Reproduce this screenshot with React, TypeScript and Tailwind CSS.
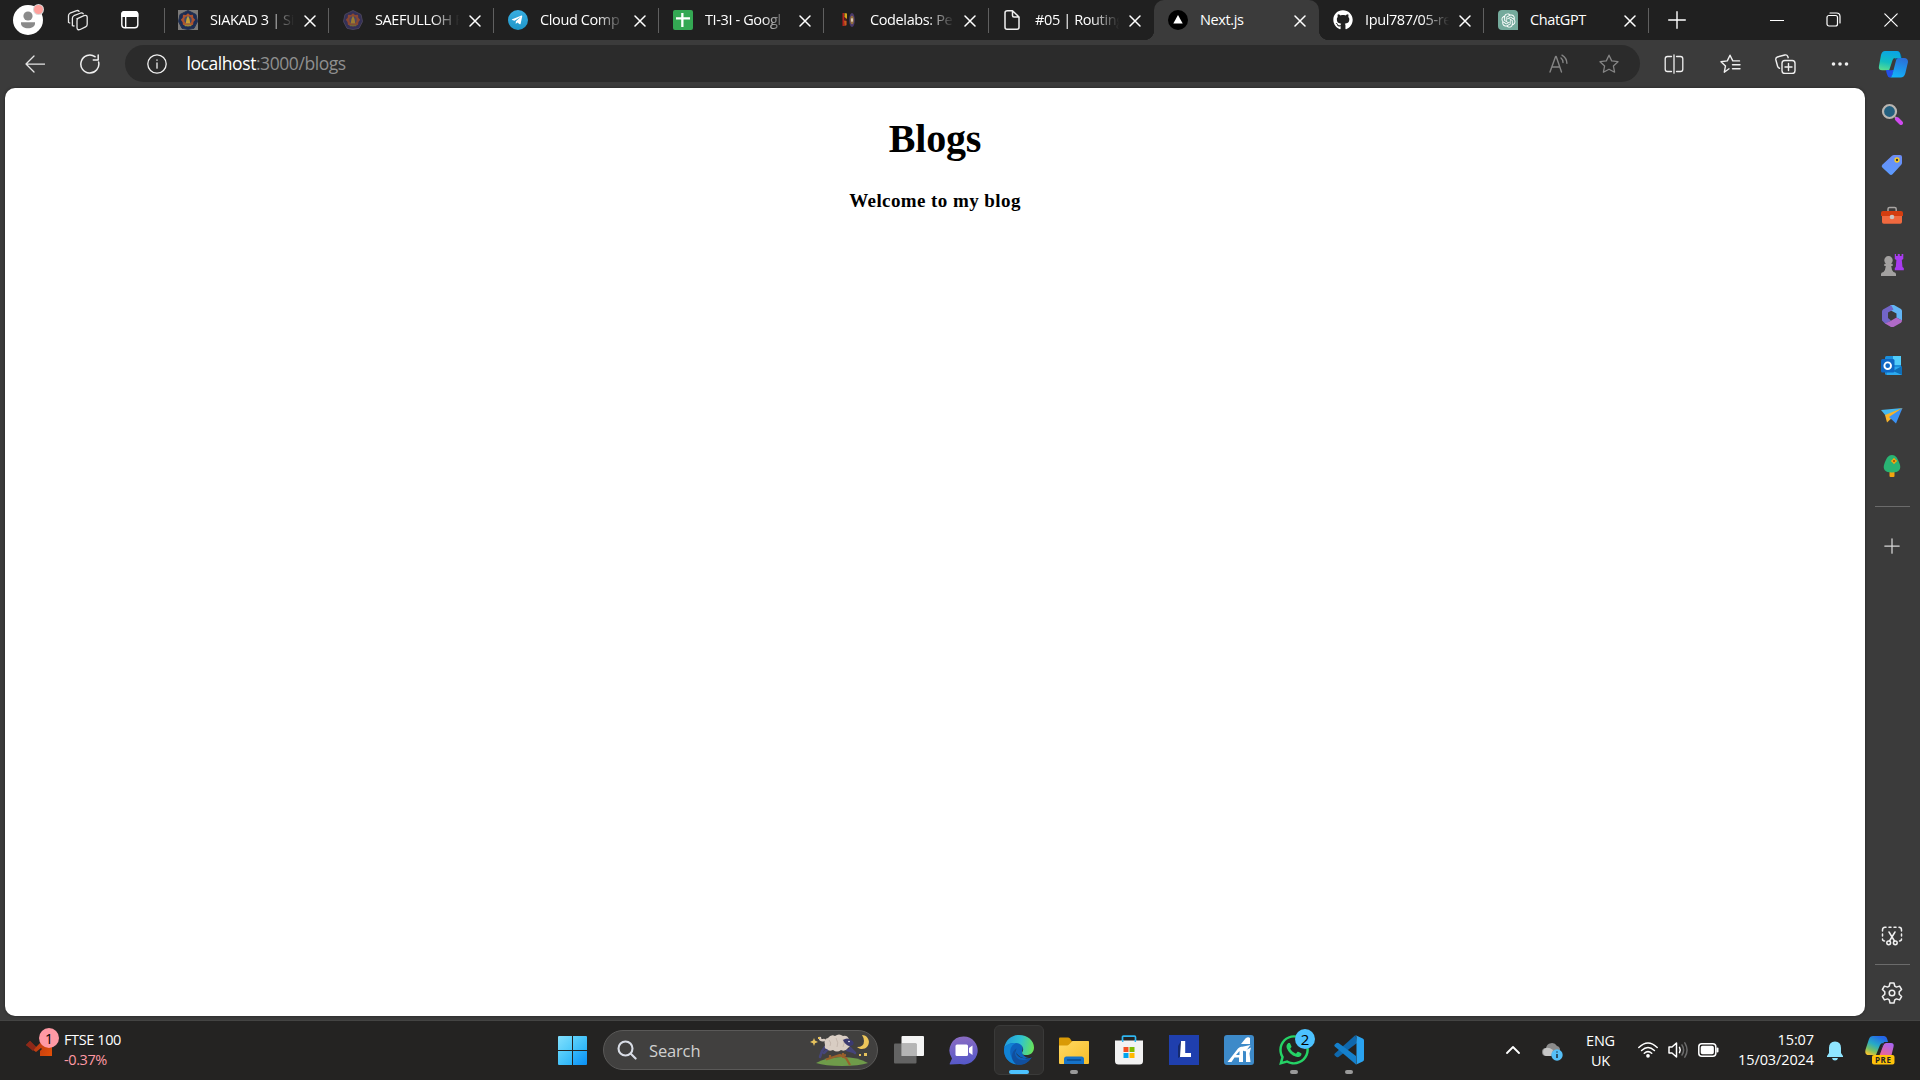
import React from "react";
import { FaGithub, FaWhatsapp, FaTelegramPlane } from "react-icons/fa";
import { RiOpenaiFill } from "react-icons/ri";

type IconProps = { w: number; h?: number; children: React.ReactNode; className?: string; sw?: number };

function Draw({ w, h = w, children, className = "" }: IconProps) {
  return (
    <svg width={w} height={h} viewBox={`0 0 ${w} ${h}`} fill="none" className={`shrink-0 ${className}`}>
      {children}
    </svg>
  );
}

function Line({ w, h = w, children, className = "text-[#f0f0f0]", sw = 1.25 }: IconProps) {
  return (
    <svg
      width={w}
      height={h}
      viewBox={`0 0 ${w} ${h}`}
      fill="none"
      stroke="currentColor"
      strokeWidth={sw}
      strokeLinecap="round"
      strokeLinejoin="round"
      className={`shrink-0 ${className}`}
    >
      {children}
    </svg>
  );
}

function Crest({ square }: { square?: boolean }) {
  return (
    <Draw w={20}>
      {square && <rect width="20" height="20" fill="#7d7b79" />}
      <path d="M10 .5 18 4.500l1.500 7-3.500 6.800L10 19.500l-6-1.200L.5 11.500 2 4.500Z" fill={square ? "#1c2d55" : "#343058"} stroke={square ? "#26334f" : "#4a4459"} />
      <path d="m10 3.200 2 1.700 3-.2.300 3 1.900 2.100-1.700 2.300-.5 2.900-3 .1-2 1.600-2-1.600-3-.1-.5-2.900-1.700-2.300 1.900-2.100.3-3 3 .2Z" fill={square ? "#ad532f" : "#8a4731"} />
      <circle cx="10" cy="10" r="3.700" fill={square ? "#3b4a6b" : "#4a4562"} />
      <path d="M10 5.500 11.500 9l.8 4.500H7.700L8.500 9Z" fill={square ? "#c79e35" : "#9d7b2e"} />
      <path d="M6 14.800h8l-1 1.500H7Z" fill={square ? "#9a8c3b" : "#716638"} />
    </Draw>
  );
}

const favicons: Record<string, React.ReactNode> = {
  siakad: <Crest square />,
  saef: <Crest />,
  telegram: (
    <span className="flex size-5 items-center justify-center rounded-full bg-linear-to-b from-[#37aee2] to-[#1e96c8]">
      <FaTelegramPlane className="mr-0.5 size-3 text-white" />
    </span>
  ),
  sheets: (
    <Draw w={20}>
      <rect width="20" height="20" rx="2" fill="#34a853" />
      <path d="M8.200 3h2.300v4.200H17v2.300h-6.500V17H8.200V9.500H3V7.200h5.200Z" fill="#fff" />
    </Draw>
  ),
  codelabs: (
    <Draw w={20}>
      <path d="M4.500 3h1.500v13H4.500Z" fill="#b5221f" />
      <path d="M6 6h2.500v10H6Z" fill="#59201c" />
      <path d="M6.500 3 9 3.500V9L6.500 7Z" fill="#d6a41c" />
      <path d="M6 10.500 8.500 11v4l-2 1Z" fill="#c9591e" />
      <ellipse cx="14" cy="10" rx="2.800" ry="7" fill="#4b3a6b" />
      <ellipse cx="14" cy="10" rx="1.800" ry="4.200" fill="#94703f" />
      <ellipse cx="14" cy="10" rx=".9" ry="2" fill="#e6dccb" />
    </Draw>
  ),
  file: (
    <Line w={20} sw={1.5}>
      <path d="M9.500 .8H4.500Q2 .8 2 2.800v14.400q0 2 2 2h10q2 0 2-2V7L9.500 .8V5.500Q9.500 7 11 7H16" />
    </Line>
  ),
  next: (
    <Draw w={20}>
      <circle cx="10" cy="10" r="10" fill="#000" />
      <path d="m10 5 4.700 8.500H5.300Z" fill="#fff" />
    </Draw>
  ),
  github: <FaGithub className="size-5 text-white" />,
  chatgpt: (
    <span className="flex size-5 items-center justify-center rounded-[4px] rounded-br-none bg-[#74aa9c]">
      <RiOpenaiFill className="size-[17px] text-white" />
    </span>
  ),
};

const tabs = [
  { icon: "siakad", title: "SIAKAD 3 | Si" },
  { icon: "saef", title: "SAEFULLOH F" },
  { icon: "telegram", title: "Cloud Comp" },
  { icon: "sheets", title: "TI-3I - Googl" },
  { icon: "codelabs", title: "Codelabs: Pe" },
  { icon: "file", title: "#05 | Routing" },
  { icon: "next", title: "Next.js", active: true },
  { icon: "github", title: "Ipul787/05-re" },
  { icon: "chatgpt", title: "ChatGPT" },
];

function Tab({ icon, title, active, quietEdge }: { icon: string; title: string; active?: boolean; quietEdge?: boolean }) {
  const fades = title.length > 8;
  return (
    <div className={`relative flex h-10 w-[165px] shrink-0 items-center pl-3.5 ${active ? "z-10 rounded-t-[10px] bg-[#3b3b3b]" : ""}`}>
      {!active && !quietEdge && <span className="absolute top-2 right-0 h-[25px] w-px bg-[#606060]" />}
      {active && (
        <>
          <span className="absolute bottom-0 -left-2.5 size-2.5 bg-[radial-gradient(circle_at_0_0,#202020_10px,#3b3b3b_10.5px)]" />
          <span className="absolute -right-2.5 bottom-0 size-2.5 bg-[radial-gradient(circle_at_100%_0,#202020_10px,#3b3b3b_10.5px)]" />
        </>
      )}
      <span className="flex size-5 shrink-0">{favicons[icon]}</span>
      <span
        className={`ml-3 w-[86px] shrink-0 text-[14.5px] leading-5 tracking-[-0.38px] whitespace-nowrap text-white ${
          fades ? "[mask-image:linear-gradient(to_right,#000_66%,transparent_98%)]" : ""
        }`}
      >
        {title}
      </span>
      <Line w={12} className="mt-0.5 ml-[8px] text-white" sw={1.5}>
        <path d="m1 1 10 10M11 1 1 11" />
      </Line>
    </div>
  );
}

function TabStrip() {
  return (
    <div className="flex h-10 items-center bg-[#202020]">
      <div className="relative ml-[13px] flex size-[30px]">
        <Draw w={30}>
          <circle cx="15" cy="15" r="15" fill="#fff" />
          <circle cx="15" cy="11" r="4.6" fill="#8a8a8a" />
          <path d="M8 17.300h14v1.200c0 3-3.200 4.800-7 4.800s-7-1.800-7-4.800Z" fill="#8a8a8a" />
        </Draw>
        <span className="absolute top-0 left-[21px] size-[9px] rounded-full bg-[#ff9f9b] ring-1 ring-[#d9d9d9]" />
      </div>
      <Line w={22} className="ml-[24px] text-[#e8e8e8]" sw={1.3}>
        <path d="M9.800 9.800 17 6.700q3.200-1 3.200 1.600v7q0 1.800-1.600 2.600l-5.400 2.600q-3 1-3.200-1.700v-7q0-1.400.8-2" />
        <path d="m7 17-1.600-.3V9.300q0-1.800 1.500-2.600L13.800 4q1.600-.4 2.400.7" />
        <path d="m2.800 14-1.300-.5V6.700q0-1.700 1.500-2.500L9.700 1.600q1.600-.4 2.400.7" />
      </Line>
      <Line w={20} className="ml-[31px] text-white" sw={1.4}>
        <rect x="1.800" y="1.800" width="16" height="16" rx="3" />
        <path d="M2 4q0-2.200 2.200-2.200h11.200q2.200 0 2.200 2.200v2.300H2Z" fill="currentColor" />
        <path d="M5.700 7v10.500" />
      </Line>
      <span className="ml-[24px] h-[25px] w-px bg-[#606060]" />
      <div className="-ml-px flex">
        {tabs.map((t, i) => (
          <Tab key={t.icon} {...t} quietEdge={i === 5} />
        ))}
      </div>
      <Line w={18} className="ml-[19px] text-white" sw={1.4}>
        <path d="M9 .7v16.600M.7 9h16.600" />
      </Line>
      <div className="ml-auto flex items-center pr-[22px] pb-px text-white">
        <Line w={14} sw={1.2} className="text-white">
          <path d="M.5 7.500h13" />
        </Line>
        <Line w={15} sw={1.2} className="ml-[42px] text-white">
          <rect x="1" y="3.500" width="10.500" height="10.500" rx="2" />
          <path d="M4 1h6.500Q14 1 14 4.500V11" />
        </Line>
        <Line w={14} sw={1.2} className="ml-[43px] text-white">
          <path d="m.8.8 12.400 12.400m0-12.400L.8 13.200" />
        </Line>
      </div>
    </div>
  );
}

const starPath = "m10 1.200 2.700 5.700 6.300.8-4.600 4.300 1.200 6.200L10 15.200l-5.600 3 1.200-6.200L1 7.700l6.300-.8Z";

function Toolbar() {
  return (
    <div className="flex h-12 items-center bg-[#3b3b3b] pb-px">
      <Line w={20} className="ml-[25px] text-[#e6e6e6]">
        <path d="M19.500 10H1M9 2 1 10l8 8" />
      </Line>
      <Line w={20} className="ml-[35px] text-[#f0f0f0]" sw={1.5}>
        <path d="M18.600 8A9 9 0 1 1 15 2.700M18.200 1v4.900h-4.900" />
      </Line>
      <div className="ml-[25px] flex h-[37px] w-[1515px] items-center rounded-full bg-[#2b2b2b]">
        <Line w={20} className="ml-[22px] text-[#f0f0f0]" sw={1.3}>
          <circle cx="10" cy="10" r="9.200" />
          <path d="M10 9v5.200M10 6v.3" />
        </Line>
        <span className="ml-[19.5px] pb-px text-[17.5px] leading-6 tracking-[-0.43px] text-[#8f8f8f]">
          <span className="text-white">localhost</span>:3000/blogs
        </span>
        <Line w={20} className="ml-auto text-[#858585]" sw={1.4}>
          <path d="m1 18 5.600-15.500h.6L12.500 18M3 13h7.800M12 4q2 1.600 2 4.500M13 1.200q4.800 2.800 4.900 8" />
        </Line>
        <Line w={20} className="mr-[21px] ml-[30px] text-[#858585]" sw={1.3}>
          <path d={starPath} />
        </Line>
      </div>
      <Line w={20} className="ml-[24px] text-[#f0f0f0]" sw={1.3}>
        <path d="M7.500 2.500h-4q-2.300 0-2.300 2.300v10.400q0 2.300 2.300 2.300h4M12.500 2.500h4q2.300 0 2.300 2.300v10.400q0 2.300-2.300 2.300h-4M10 .8v18.400" />
      </Line>
      <Line w={21} h={20} className="ml-[36px] text-[#f0f0f0]" sw={1.4}>
        <path d="M9 14.800 4.300 18.200l1.200-6.300L1 7.700l6.300-.8L10 1.200l2.800 5.700h6.700M12.500 10.700H20M12.500 14.700H20" />
      </Line>
      <Line w={21} h={20} className="ml-[34px] text-[#f0f0f0]" sw={1.4}>
        <rect x="7" y="6.500" width="13" height="13" rx="2.800" />
        <path d="M13.500 9.500v7M10 13h7M4.500 14.200Q3 13.800 2.600 12.300L.9 6q-.5-2.500 1.500-3L9.800 1q2.200-.5 3 1.500l.4 1.200" />
      </Line>
      <Draw w={18} h={6} className="ml-[35px]">
        <circle cx="2.500" cy="3" r="1.800" fill="#f0f0f0" />
        <circle cx="9" cy="3" r="1.800" fill="#f0f0f0" />
        <circle cx="15.500" cy="3" r="1.800" fill="#f0f0f0" />
      </Draw>
      <Draw w={30} h={27} className="mt-px ml-[29px]">
        <path d="M17 7 19 1q1-1 2 0 2 1 3 6l-7 2Z" fill="#075985" />
        <path d="M7 0h12q2.600 0 3.200 3l.8 4h-4q-2 0-2.700 2.300L13.300 17q-.7 2.300-3.200 2.300H4.200Q0 19.300 1 14.800L3 4Q4 0 7 0Z" fill="url(#cpA)" />
        <path d="M8 19h8l-2 6q-1 1.800-2.500 1.600Q9 26 8 19Z" fill="#2250e8" />
        <path d="M20 7h6q4 0 4 4l-2.600 11q-1.100 4.500-5 4.500H12q1.600-.3 2.400-3L18 9.500Q18.700 7 20 7Z" fill="url(#cpB)" />
        <path d="m17.300 8-3.600 11.300h-2.500L14.600 9q.5-2 2.700-2Z" fill="#3b3b3b" />
        <defs>
          <linearGradient id="cpA" x1="10" y1="0" x2="6" y2="20" gradientUnits="userSpaceOnUse">
            <stop stopColor="#0aa5e4" />
            <stop offset=".55" stopColor="#12bec0" />
            <stop offset="1" stopColor="#5fe08c" />
          </linearGradient>
          <linearGradient id="cpB" x1="24" y1="7" x2="18" y2="27" gradientUnits="userSpaceOnUse">
            <stop stopColor="#2b6fd8" />
            <stop offset="1" stopColor="#12b4fa" />
          </linearGradient>
        </defs>
      </Draw>
    </div>
  );
}

function Slot({ children, className = "" }: { children: React.ReactNode; className?: string }) {
  return <div className={`flex h-[50.3px] w-full shrink-0 items-center justify-center ${className}`}>{children}</div>;
}

function Sidebar() {
  return (
    <aside className="flex w-[55px] shrink-0 flex-col items-center pt-px pr-0.5">
      <Slot>
        <Draw w={22}>
          <path d="m14 14 3 3" stroke="#aaa" strokeWidth="2" />
          <path d="m16 16 4 4" stroke="#d04af0" strokeWidth="4" strokeLinecap="round" />
          <circle cx="8.500" cy="8.500" r="6.500" fill="#24607f" stroke="#b9b5b1" strokeWidth="2.200" />
        </Draw>
      </Slot>
      <Slot className="pt-0.5">
        <Draw w={22}>
          <path d="M13 1h6q2 0 2 2v6q0 1-1 2l-8.500 9.300q-1.500 1.400-3 0L1.300 13.500q-1.300-1.400 0-2.800L11 1.800Q12 1 13 1Z" fill="url(#tagG)" />
          <circle cx="16" cy="6" r="1.900" fill="#333" stroke="#f6c927" strokeWidth="1.500" />
          <defs>
            <linearGradient id="tagG" x1="12" y1="1" x2="9" y2="21" gradientUnits="userSpaceOnUse">
              <stop stopColor="#6c8cf5" />
              <stop offset="1" stopColor="#5b9bff" />
            </linearGradient>
          </defs>
        </Draw>
      </Slot>
      <Slot>
        <Draw w={24} h={18}>
          <path d="M8 6V3q0-1.600 1.600-1.600h5Q16.200 1.400 16.200 3v3" stroke="#a9a5a3" strokeWidth="1.500" />
          <path d="M2 9h20v7q0 1.800-1.800 1.800H3.800Q2 17.800 2 16Z" fill="#f0693f" />
          <path d="M1 7q0-2 2-2h18q2 0 2 2v3H1Z" fill="#d33d10" />
          <circle cx="12" cy="11" r="2.300" fill="#c9c5c3" />
        </Draw>
      </Slot>
      <Slot>
        <Draw w={24}>
          <path d="M14 1h2v2h1.800V1h2v2h1.800V1h1.700v5l-1.500 1 .7 7 1.300 1v2.200h-9V15l1-1 .6-7-1.600-1V1Z" fill="#a83bf0" />
          <path d="M1 23v-2q0-1.600 2.500-2 2-2 2.300-6H4.300v-2l1.700-.4a4.200 4.200 0 1 1 5 0l1.700.4v2h-1.500q.3 4 2.300 6 2.500.4 2.500 2v2Z" fill="#a3a1a0" />
        </Draw>
      </Slot>
      <Slot className="pt-px">
        <Draw w={22}>
          <path d="m9.500 0h3.500l7 4q1 1 1 2v9.500q-3-1.500-5.500-3V8.500L9 5Z" fill="#62b5f5" />
          <path d="m10 0-8 4.500Q1 5.500 1 6.500v9l3.500 3.500L10 15.500 7 13V7.500l5.500-3Z" fill="#7265c7" />
          <path d="M4 18.500 10 22q1.300.4 2.500 0l7.500-4.200q1-1 1-2.500-3-1-5.500-2.800L9.500 16Z" fill="#b06ac8" />
        </Draw>
      </Slot>
      <Slot>
        <Draw w={22}>
          <rect x="4" y="1" width="16" height="19" rx="1.500" fill="#1b8fdc" />
          <path d="M12 1h8v9h-8Z" fill="#50cdfb" />
          <path d="M6 12h15v8H6Z" fill="#2baaf0" />
          <path d="m21 11-9 5 9 4Z" fill="#0f6fb8" />
          <rect x="0" y="4" width="13.500" height="13.500" rx="1.500" fill="#0f67c4" />
          <circle cx="6.700" cy="10.700" r="3.300" stroke="#fff" strokeWidth="1.900" />
        </Draw>
      </Slot>
      <Slot>
        <Draw w={24} h={18}>
          <path d="M1 3 22.500 1 6 9Z" fill="#45b7ee" />
          <path d="m5 8 17.500-7L7 15.500Z" fill="#f7b32b" />
          <path d="m9 10 13.500-9L16 16.500Z" fill="#3b92f5" />
        </Draw>
      </Slot>
      <Slot>
        <Draw w={20} h={22}>
          <rect x="7.500" y="16" width="5" height="6" rx="1" fill="#f2a40f" />
          <path d="M10 0C5.500 0 4 4.500 2.300 9 .5 14 3 17.500 10 17.500S19.500 14 17.700 9C16 4.500 14.500 0 10 0Z" fill="#29b473" />
          <path d="M10.500 4.500 12 2.800l1.500 1.700L15.300 6l-1.800 1.500L12 9.200l-1.500-1.700L8.700 6Z" fill="#f7a60f" />
          <circle cx="12" cy="6" r="1" fill="#a04a00" />
        </Draw>
      </Slot>
      <span className="mt-[15px] ml-0.5 h-px w-[35px] shrink-0 bg-[#6b6b6b]" />
      <Line w={16} className="mt-[31px] text-[#d8d8d8]">
        <path d="M8 .8v14.400M.8 8h14.400" />
      </Line>
      <div className="mt-auto flex flex-col items-center pb-4">
        <Line w={22} h={20} sw={1.5}>
          <path d="M1.500 5V4Q1.500 1.300 4 1.300h1M8 1.300h2M13 1.300h2M18 1.300q2.500 0 2.500 2.700v1M20.500 8v2M20.500 13q0 2-2 2M1.500 8v2M1.500 13q0 2 2 2M8 6l5.500 9M14 6l-5.500 9" />
          <circle cx="7.700" cy="16.800" r="1.900" />
          <circle cx="14.300" cy="16.800" r="1.900" />
        </Line>
        <span className="mt-[18px] ml-0.5 h-px w-[35px] bg-[#6b6b6b]" />
        <Line w={22} className="mt-[17px] text-[#f0f0f0]" sw={1.5}>
          <circle cx="11" cy="11" r="2.800" />
          <path d="M9 1h4l.8 3.200 1.600.9 3.200-1 2 3.400-2.400 2.300v2.400l2.400 2.300-2 3.400-3.200-1-1.600.9L13 21H9l-.8-3.200-1.600-.9-3.200 1-2-3.400 2.400-2.300V9.800L1.400 7.500l2-3.400 3.200 1 1.600-.9Z" />
        </Line>
      </div>
    </aside>
  );
}

function Sheep() {
  return (
    <Draw w={60} h={34}>
      <path d="M6 30Q16 24 32 24t26 6q-9 3-26 3T6 30Z" fill="#6f9b4a" />
      <path d="M16 26.500 30 22l6 3 4 7M20 22v4M33 20v5M26 23l10-1" stroke="#98602c" strokeWidth="2.200" />
      <path d="m15 14-3 4-2 6M19 15l-5 5M40 15l5 5M37 17l7 2" stroke="#45457a" strokeWidth="2.500" strokeLinecap="round" />
      <path d="M15 12q-2-6 3-7 3-4 7-2 4-3 8 0 5-1 6 4 3 5-1 8-3 4-7 2-4 3-8 0-4 2-6-1-3 0-2-4Z" fill="#d9cdc3" />
      <path d="M19 7q3 3 1 6M26 5q3 5 1 9M33 6q2 5 0 8" stroke="#c5b7ad" strokeWidth="1" />
      <path d="M14 7q-4 1-4-2" stroke="#d9cdc3" strokeWidth="2.500" strokeLinecap="round" />
      <path d="M33 7q4-3 8 0 4 2 2 5-4 2-6 0-3-2-4-5Z" fill="#3b3a70" />
      <circle cx="39" cy="8.500" r=".8" fill="#fff" />
      <path d="M52 2a7 7 0 1 1-5 12q7 0 7-6 0-3-2-6Z" fill="#edc65a" />
      <path d="m4 5 1 2.600L8 9l-3 1.200L4 13l-1-2.800L0 9l3-1.400ZM8 4h2v2H8ZM54 20h3v3h-3ZM49 21h2v2h-2Z" fill="#e6c25d" />
    </Draw>
  );
}

function AppSlot({ children, mark, active }: { children: React.ReactNode; mark?: boolean; active?: boolean }) {
  return (
    <div className={`relative mr-[5px] flex size-[50px] shrink-0 items-center justify-center rounded-md ${active ? "border border-[#3a3a39] bg-[#2f2e2d]" : ""}`}>
      {children}
      {(mark || active) && (
        <span className={`absolute inset-x-0 mx-auto h-1 rounded-full ${active ? "bottom-0 w-5 bg-[#4cc2ff]" : "bottom-px w-2 bg-[#9a9a9a]"}`} />
      )}
    </div>
  );
}

function CopilotPre() {
  return (
    <Draw w={30} h={29}>
      <path d="M8 0h11q3 0 4 6h-4l-4 9q-1 4-4 4H4Q-1 19 .7 13L4 3Q5 0 8 0Z" fill="url(#preA)" />
      <path d="M21 7h5q3.500 0 2.500 4L26 21H11q3 0 4-3l3-8q1-3 3-3Z" fill="url(#preB)" />
      <path d="m18.500 7-4.500 12h-3l4-10q.8-2 3.500-2Z" fill="#242322" />
      <rect x="7" y="19" width="22.500" height="9.500" rx="2" fill="#ffc20a" />
      <text x="18.300" y="26.800" fontSize="8" fontWeight="700" textAnchor="middle" fill="#222" letterSpacing=".6" fontFamily="Open Sans, sans-serif">PRE</text>
      <defs>
        <linearGradient id="preA" x1="14" y1="0" x2="5" y2="19" gradientUnits="userSpaceOnUse">
          <stop stopColor="#2466e8" />
          <stop offset=".45" stopColor="#26aac8" />
          <stop offset=".75" stopColor="#73bf66" />
          <stop offset="1" stopColor="#f2c230" />
        </linearGradient>
        <linearGradient id="preB" x1="25" y1="7" x2="18" y2="21" gradientUnits="userSpaceOnUse">
          <stop stopColor="#a865f2" />
          <stop offset="1" stopColor="#f2648c" />
        </linearGradient>
      </defs>
    </Draw>
  );
}

function Taskbar() {
  return (
    <footer className="flex h-[60px] items-center border-t border-[#444443] bg-[#242322] pb-px text-white">
      <div className="relative ml-[25px] flex h-[40px] w-[39px] shrink-0">
        <Draw w={32} h={34}>
          <path d="m1 15 4-4 6 6 5-5 5 5 6-6v15H15v-5l2-2-1-1-5 4Z" fill="url(#ftse)" />
          <path d="m1 15 4-4 6 6-3 4Z" fill="#8e2818" />
          <defs>
            <linearGradient id="ftse" x1="2" y1="12" x2="28" y2="28" gradientUnits="userSpaceOnUse">
              <stop stopColor="#a83018" />
              <stop offset="1" stopColor="#e85206" />
            </linearGradient>
          </defs>
        </Draw>
        <span className="absolute -top-[2px] left-[14px] flex size-5 items-center justify-center rounded-full bg-[#ff99a4] text-[14px] text-black">1</span>
      </div>
      <div className="w-[120px] shrink-0 text-[14.5px] leading-5 tracking-[-0.4px]">
        <div>FTSE 100</div>
        <div className="text-[#ff99a4]">-0.37%</div>
      </div>

      <div className="ml-[374px] flex items-center">
        <Draw w={29} className="mt-px">
          <path d="M1 0h13v14H0V1Q0 0 1 0Z" fill="url(#wA)" />
          <path d="M15 0h13q1 0 1 1v13H15Z" fill="url(#wB)" />
          <path d="M0 15h14v14H1q-1 0-1-1Z" fill="url(#wB)" />
          <path d="M15 15h14v13q0 1-1 1H15Z" fill="url(#wC)" />
          <defs>
            <linearGradient id="wA" x1="0" y1="0" x2="1" y2="1"><stop stopColor="#82dffd" /><stop offset="1" stopColor="#4cc9fa" /></linearGradient>
            <linearGradient id="wB" x1="0" y1="0" x2="1" y2="1"><stop stopColor="#5fd2fb" /><stop offset="1" stopColor="#2bb3f8" /></linearGradient>
            <linearGradient id="wC" x1="0" y1="0" x2="1" y2="1"><stop stopColor="#35b8fb" /><stop offset="1" stopColor="#0a90f5" /></linearGradient>
          </defs>
        </Draw>
        <div className="ml-4 flex h-10 w-[275px] items-center rounded-full border border-[#5a5958] bg-[#41403f] pl-[13px]">
          <Line w={20} className="text-[#d9dde6]" sw={2.1}>
            <circle cx="8.500" cy="8.500" r="7" />
            <path d="m13.600 13.600 5 5" />
          </Line>
          <span className="ml-[12px] pt-px text-[16.5px] leading-6 tracking-[-0.15px] text-[#d0d0d0]">Search</span>
          <span className="mr-[7px] ml-auto flex"><Sheep /></span>
        </div>
        <div className="ml-[6px] flex">
          <AppSlot>
            <Draw w={30} h={28}>
              <rect x="7.500" y="0" width="22.500" height="20" rx="1" fill="#f4f4f4" />
              <rect x="0" y="7.500" width="22.500" height="20" rx="1" fill="#6e6e6e" fillOpacity=".85" />
              <rect x="7.500" y="7.500" width="15" height="12.500" fill="#b5b5b5" />
            </Draw>
          </AppSlot>
          <AppSlot>
            <Draw w={29} className="mr-0.5">
              <path d="M15 .5A14 14 0 1 1 11 28L1 28.500Q.3 28.200 1 27L3 22.500A14 14 0 0 1 15 .5Z" fill="url(#chat)" />
              <rect x="6.500" y="8.500" width="12.500" height="11.500" rx="1.500" fill="#fff" />
              <path d="m20 12 3.500-2.500v9.500L20 16.500Z" fill="#fff" />
              <defs>
                <linearGradient id="chat" x1="12" y1="0" x2="15" y2="28" gradientUnits="userSpaceOnUse"><stop stopColor="#8b6cc2" /><stop offset="1" stopColor="#5558c9" /></linearGradient>
              </defs>
            </Draw>
          </AppSlot>
          <AppSlot active>
            <Draw w={30}>
              <path d="M0 15C0 8 6 4 12 6c6 2 8 6 6 10 0 5 5 8 10 6-4 6-10 9-17 7C4 27 0 22 0 15Z" fill="#0e62bd" />
              <path d="M.2 13C1.500 5 7.500 0 15 0c9 0 15 6 15 12.500 0 5-3.500 7.500-7.500 7.500-4 0-5-1.500-4-3.200 2-3.500-.5-8-6-8.800C7 7.400 2 9.500.2 13Z" fill="url(#edA)" />
              <path d="M0 15c0-4.500 5-7.500 12-7-5 2-7 7-5 13 1 3 2.500 6 5.500 8.600C5 28.500 0 22.500 0 15Z" fill="#1183d5" />
              <path d="M12.500 13.500q-2.500 3-1 7c2 5 8 6 15.500 2.500-3.500 6-9 7.500-14.500 6.600C6.500 25 6.500 17 12.500 13.500Z" fill="#114f9e" />
              <path d="M12.500 13.500q-2 4 2 7.800 4 3 9.500 1.200l3.500-1.300q1-.2.400 1-6 2.500-11.400-.3Q9.500 17.500 12.500 13.500Z" fill="#2a2928" />
              <defs>
                <linearGradient id="edA" x1="2" y1="7" x2="30" y2="13" gradientUnits="userSpaceOnUse"><stop stopColor="#249fdd" /><stop offset=".5" stopColor="#2fc3d0" /><stop offset="1" stopColor="#6be553" /></linearGradient>
              </defs>
            </Draw>
          </AppSlot>
          <AppSlot mark>
            <Draw w={30} h={28} className="mt-px">
              <path d="M0 1.500Q0 .5 1 .5h8q1 0 2 1l2 3H30V10H0Z" fill="#d99a06" />
              <path d="M0 8.500h8q1 0 2-1l3.500-3.500H29q1 0 1 1V26q0 1-1 1H1q-1 0-1-1Z" fill="url(#fold)" />
              <path d="M5 27v-5q0-2.500 2.500-2.500h15Q25 19.500 25 22v5Z" fill="#1673c9" />
              <path d="M8.500 23h13" stroke="#0b4a8a" strokeWidth="1.500" strokeLinecap="round" />
              <defs><linearGradient id="fold" x1="5" y1="4" x2="24" y2="28" gradientUnits="userSpaceOnUse"><stop stopColor="#ffd75e" /><stop offset="1" stopColor="#f8c02e" /></linearGradient></defs>
            </Draw>
          </AppSlot>
          <AppSlot>
            <Draw w={30}>
              <path d="M8.500 7V2.200q0-1 1-1h11q1 0 1 1V7" stroke="#2fb6f0" strokeWidth="1.700" />
              <path d="M1 5.500h28V26q0 3.500-3.500 3.500h-21Q1 29.500 1 26Z" fill="#f2f2f2" />
              <path d="M8.700 5V7M21.300 5V7" stroke="#2fb6f0" strokeWidth="1.500" />
              <path d="M9.500 12h5v5h-5Z" fill="#f25022" /><path d="M15.500 12h5v5h-5Z" fill="#7fba00" />
              <path d="M9.500 18h5v5h-5Z" fill="#00a4ef" /><path d="M15.500 18h5v5h-5Z" fill="#ffb900" />
            </Draw>
          </AppSlot>
          <AppSlot>
            <Draw w={30}>
              <rect width="30" height="30" fill="#1f3fae" />
              <path d="m12 6-3 5v12l3-2Z" fill="#152a6e" />
              <path d="M12 6h4.200v12H22v4H11Z" fill="#fff" />
            </Draw>
          </AppSlot>
          <AppSlot>
            <Draw w={30}>
              <rect width="30" height="30" rx="3" fill="#3d8ac9" />
              <path d="m17 9 4.500-5.500Q24 1.500 26 3v6Z" fill="#fff" />
              <path d="M3.500 27 14 13.500q3-3 5-1V27h-4v-4.500h-4.500L7.500 27ZM22 15l5-2.500-1.500 6 1 8.500H22Z" fill="#fff" />
              <path d="m17 12 9.500-2-5 6.500-3-1Z" fill="#fff" />
              <path d="m12 20 3.500-4v4Z" fill="#3d8ac9" />
            </Draw>
          </AppSlot>
          <AppSlot mark>
            <FaWhatsapp className="size-[34px] text-[#25d366]" />
            <span className="absolute top-[4px] left-[26px] flex size-5 items-center justify-center rounded-full bg-[#4cc2ff] text-[15px] text-black">2</span>
          </AppSlot>
          <AppSlot mark>
            <Draw w={30}>
              <path d="M21.500 0 .8 18.500q-1 1 0 2L2.500 22q1 .7 2 0L23 8Z" fill="#0f68ad" />
              <path d="M.8 11.500q-1-1 0-2L2.500 8q1-.7 2 0L22 21v8.500Z" fill="#1580cc" />
              <path d="m21.700.2 7 3.300q1.300.7 1.300 2v19q0 1.300-1.300 2l-7 3.300q.8-.4.800-1.800V2q0-1.300-.8-1.800Z" fill="#2aa3f0" />
            </Draw>
          </AppSlot>
        </div>
      </div>

      <div className="ml-auto flex items-center">
        <Line w={14} h={10} sw={1.8} className="text-white"><path d="m1 8 6-6 6 6" /></Line>
        <Draw w={22} h={20} className="mt-[4px] ml-[22px]">
          <path d="M4 14a4 4 0 0 1 0-8 6 6 0 0 1 11-2 4 4 0 0 1 3 4l-8 6Z" fill="#8c8c8c" />
          <path d="M4 14a4.200 4.200 0 0 1 0-8q3-1 7 2l-2 6Z" fill="#c6c6c6" />
          <circle cx="15" cy="13" r="5.700" fill="#55bff8" />
          <path d="M15 12v4M15 9.500v1.100" stroke="#1c2c38" strokeWidth="1.500" />
        </Draw>
        <div className="ml-[21px] w-[31px] pt-px text-center text-[14.5px] leading-5 tracking-[-0.2px] whitespace-nowrap">
          <div>ENG</div>
          <div>UK</div>
        </div>
        <Line w={20} h={16} className="ml-[22px] text-white" sw={1.5}>
          <path d="M.8 5.500q9.200-9 18.400 0M3.600 8.500q6.400-6 12.800 0M6.300 11.300q3.700-3.300 7.400 0" />
          <circle cx="10" cy="13.800" r="1.100" fill="currentColor" />
        </Line>
        <Line w={20} h={18} className="ml-[10px] text-white" sw={1.5}>
          <path d="M1 6h3l4.500-4v14L4 12H1ZM11.500 6.300q1.500 2.700 0 5.400" />
          <path d="M14 4q3.200 5 0 10M16.800 1.800q4.500 7.200 0 14.400" stroke="#6b6b6b" />
        </Line>
        <Line w={21} h={14} className="ml-[10px] text-white" sw={1.5}>
          <rect x=".8" y=".8" width="17" height="12.400" rx="3" />
          <rect x="3.500" y="3.500" width="11.600" height="7" rx="1" fill="currentColor" />
          <path d="M19.500 5.500v3" strokeWidth="2" />
        </Line>
        <div className="ml-[18px] w-[77px] text-right text-[14.5px] leading-5 tracking-[-0.1px] whitespace-nowrap">
          <div>15:07</div>
          <div>15/03/2024</div>
        </div>
        <Draw w={16} h={20} className="mt-px ml-[13px]">
          <path d="M8 .5q6 .3 6 6.500v5l2 3v1H0v-1l2-3V7Q2 .8 8 .5Z" fill="#8fe5ff" />
          <path d="M5 17h6q-.6 2.500-3 2.500T5 17Z" fill="#8fe5ff" />
        </Draw>
        <div className="mt-px mr-[25px] ml-[22px] flex"><CopilotPre /></div>
      </div>
    </footer>
  );
}

export default function App() {
  return (
    <div className="flex h-[1080px] w-[1920px] flex-col overflow-hidden bg-[#3b3b3b] font-['Open_Sans','Noto_Sans',sans-serif]">
      <TabStrip />
      <Toolbar />
      <div className="flex min-h-0 flex-1">
        <main className="ml-[5px] h-[928px] flex-1 rounded-[10px] bg-white pt-7 text-center font-['Liberation_Serif',serif] font-bold text-black shadow-[0_0_3px_rgba(0,0,0,0.4)]">
          <h1 className="text-[40px] leading-[46px] tracking-[-0.2px]">Blogs</h1>
          <h3 className="mt-[27px] text-[19px] leading-[23px] tracking-[0.42px]">Welcome to my blog</h3>
        </main>
        <Sidebar />
      </div>
      <Taskbar />
    </div>
  );
}
